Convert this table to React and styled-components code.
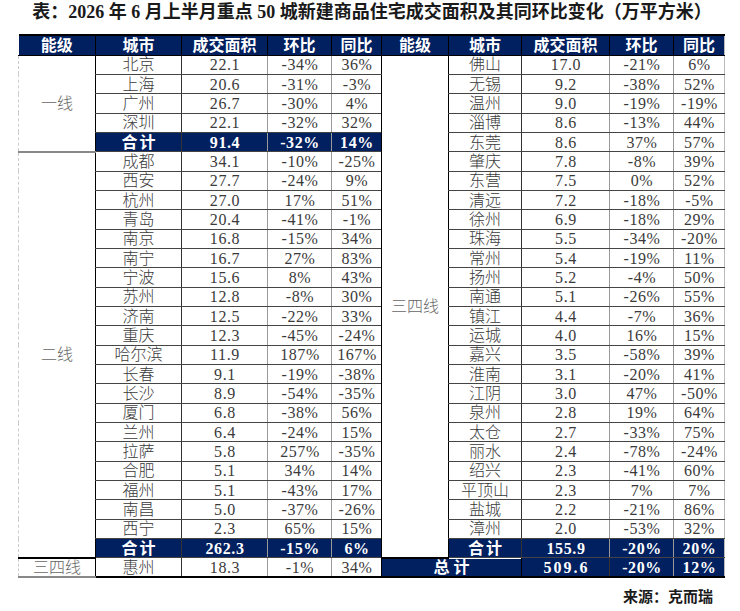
import React from "react";
import styled, { createGlobalStyle } from "styled-components";

const GlobalStyle = createGlobalStyle`
  body {
    margin: 0;
    background: #fff;
    font-family: "Liberation Serif", "Noto Sans CJK SC", serif;
  }
`;

const NAVY = "#002060";

// 左半边：按能级分组
const leftGroups = [
  {
    tier: "一线",
    rows: [
      ["北京", "22.1", "-34%", "36%"],
      ["上海", "20.6", "-31%", "-3%"],
      ["广州", "26.7", "-30%", "4%"],
      ["深圳", "22.1", "-32%", "32%"],
    ],
    total: ["合计", "91.4", "-32%", "14%"],
  },
  {
    tier: "二线",
    rows: [
      ["成都", "34.1", "-10%", "-25%"],
      ["西安", "27.7", "-24%", "9%"],
      ["杭州", "27.0", "17%", "51%"],
      ["青岛", "20.4", "-41%", "-1%"],
      ["南京", "16.8", "-15%", "34%"],
      ["南宁", "16.7", "27%", "83%"],
      ["宁波", "15.6", "8%", "43%"],
      ["苏州", "12.8", "-8%", "30%"],
      ["济南", "12.5", "-22%", "33%"],
      ["重庆", "12.3", "-45%", "-24%"],
      ["哈尔滨", "11.9", "187%", "167%"],
      ["长春", "9.1", "-19%", "-38%"],
      ["长沙", "8.9", "-54%", "-35%"],
      ["厦门", "6.8", "-38%", "56%"],
      ["兰州", "6.4", "-24%", "15%"],
      ["拉萨", "5.8", "257%", "-35%"],
      ["合肥", "5.1", "34%", "14%"],
      ["福州", "5.1", "-43%", "17%"],
      ["南昌", "5.0", "-37%", "-26%"],
      ["西宁", "2.3", "65%", "15%"],
    ],
    total: ["合计", "262.3", "-15%", "6%"],
  },
  {
    tier: "三四线",
    rows: [["惠州", "18.3", "-1%", "34%"]],
  },
];

// 右半边：全部三四线
const rightRows = [
  ["佛山", "17.0", "-21%", "6%"],
  ["无锡", "9.2", "-38%", "52%"],
  ["温州", "9.0", "-19%", "-19%"],
  ["淄博", "8.6", "-13%", "44%"],
  ["东莞", "8.6", "37%", "57%"],
  ["肇庆", "7.8", "-8%", "39%"],
  ["东营", "7.5", "0%", "52%"],
  ["清远", "7.2", "-18%", "-5%"],
  ["徐州", "6.9", "-18%", "29%"],
  ["珠海", "5.5", "-34%", "-20%"],
  ["常州", "5.4", "-19%", "11%"],
  ["扬州", "5.2", "-4%", "50%"],
  ["南通", "5.1", "-26%", "55%"],
  ["镇江", "4.4", "-7%", "36%"],
  ["运城", "4.0", "16%", "15%"],
  ["嘉兴", "3.5", "-58%", "39%"],
  ["淮南", "3.1", "-20%", "41%"],
  ["江阴", "3.0", "47%", "-50%"],
  ["泉州", "2.8", "19%", "64%"],
  ["太仓", "2.7", "-33%", "75%"],
  ["丽水", "2.4", "-78%", "-24%"],
  ["绍兴", "2.3", "-41%", "60%"],
  ["平顶山", "2.3", "7%", "7%"],
  ["盐城", "2.2", "-21%", "86%"],
  ["漳州", "2.0", "-53%", "32%"],
];
const rightTotal = ["合计", "155.9", "-20%", "20%"];
const grandTotal = ["总计", "509.6", "-20%", "12%"];

const headers = ["能级", "城市", "成交面积", "环比", "同比"];
const leftWidths = [77, 86, 86, 64, 50];
const rightWidths = [67, 73, 88, 64, 51];

const Page = styled.div`
  width: 740px;
  height: 611px;
  overflow: hidden;
`;

const Title = styled.h1`
  margin: 0 0 10px;
  font-size: 18px;
  line-height: 24px;
  font-weight: 700;
  color: #1a1a1a;
  text-align: center;
  padding-left: 4px;
`;

const Table = styled.table`
  margin-left: 18px;
  width: 706px;
  border-collapse: collapse;
  table-layout: fixed;
  border-bottom: 2px solid #000;
  font-size: 16px;
  color: #333;
`;

const HeadRow = styled.tr`
  height: 20px;
`;

const HeadCell = styled.th`
  background: ${NAVY};
  color: #fff;
  font-weight: 700;
  font-size: 16px;
  line-height: 17px;
  padding: 0;
  text-align: center;
  border-top: 2px solid #000;
  border-left: 1px solid #000;
  border-bottom: 1px solid #000;
  &:first-child {
    border-left: none;
  }
  &:last-child {
    border-right: 1px solid #bbb;
  }
`;

const Row = styled.tr`
  height: 19.35px;
`;

const TierCell = styled.td`
  padding: 0;
  text-align: center;
  color: #666;
  font-weight: 300;
  line-height: 17px;
  border-left: 1px ${(p) => (p.$edge ? "dashed #ccc" : "solid #000")};
  border-bottom: 2px solid ${(p) => (p.$dark ? "#000" : "#888")};
`;

const Cell = styled.td`
  padding: 0 0 0 ${(p) => (p.$num ? "1px" : "0")};
  text-align: center;
  line-height: 17px;
  white-space: nowrap;
  overflow: hidden;
  letter-spacing: ${(p) => (p.$num ? "0.6px" : "0")};
  border-left: 1px solid ${(p) => p.$line || "#000"};
  border-bottom: 1px solid #444;
  background: ${(p) => (p.$total ? NAVY : "transparent")};
  color: ${(p) => (p.$total ? "#fff" : "#3a3a3a")};
  font-weight: ${(p) => (p.$total ? 700 : 300)};
  &:last-child {
    border-right: 1px solid #bbb;
  }
`;

const Spaced = styled.span`
  letter-spacing: ${(p) => p.$gap}px;
  padding-left: ${(p) => p.$gap}px;
`;

const Source = styled.div`
  margin-top: 10px;
  padding-right: 27px;
  text-align: right;
  font-size: 15px;
  line-height: 18px;
  font-weight: 700;
  color: #1a1a1a;
`;

const lineColors = ["#000", "#333", "#999", "#999"];

function DataCells({ values, total }) {
  return values.map((v, i) => (
    <Cell key={i} $total={total} $line={lineColors[i]} $num={i > 0}>
      {i === 0 && total ? <Spaced $gap={2}>{v}</Spaced> : v}
    </Cell>
  ));
}

function buildLeftRows() {
  const out = [];
  leftGroups.forEach((g, gi) => {
    const span = g.rows.length + (g.total ? 1 : 0);
    g.rows.forEach((r, ri) => {
      out.push({
        tier: ri === 0 ? { label: g.tier, span, dark: gi === 1 } : null,
        values: r,
        total: false,
      });
    });
    if (g.total) out.push({ tier: null, values: g.total, total: true });
  });
  return out;
}

export default function App() {
  const left = buildLeftRows();
  const rightSpan = rightRows.length + 1;

  const right = [
    ...rightRows.map((r) => ({ values: r, total: false })),
    { values: rightTotal, total: true },
  ];

  return (
    <Page>
      <GlobalStyle />
      <Title>
        表：2026 年 6 月上半月重点 50 城新建商品住宅成交面积及其同环比变化（万平方米）
      </Title>
      <Table>
        <colgroup>
          {leftWidths.concat(rightWidths).map((w, i) => (
            <col key={i} style={{ width: w }} />
          ))}
        </colgroup>
        <thead>
          <HeadRow>
            {headers.concat(headers).map((h, i) => (
              <HeadCell key={i}>{h}</HeadCell>
            ))}
          </HeadRow>
        </thead>
        <tbody>
          {left.map((l, i) => {
            const r = right[i];
            const isLast = i === left.length - 1;
            return (
              <Row key={i}>
                {l.tier && (
                  <TierCell rowSpan={l.tier.span} $edge $dark={l.tier.dark}>
                    {l.tier.label}
                  </TierCell>
                )}
                <DataCells values={l.values} total={l.total} />
                {i === 0 && (
                  <TierCell rowSpan={rightSpan} $dark>
                    三四线
                  </TierCell>
                )}
                {isLast ? (
                  <>
                    <Cell colSpan={2} $total $line="#000">
                      <Spaced $gap={4}>{grandTotal[0]}</Spaced>
                    </Cell>
                    <DataCells values={grandTotal.slice(1)} total />
                  </>
                ) : (
                  <DataCells values={r.values} total={r.total} />
                )}
              </Row>
            );
          })}
        </tbody>
      </Table>
      <Source>来源：克而瑞</Source>
    </Page>
  );
}
